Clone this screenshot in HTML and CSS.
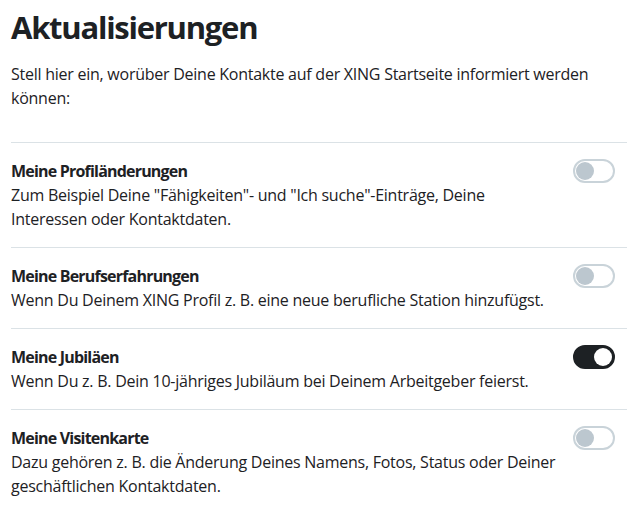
FILE: index.html
```html
<!DOCTYPE html>
<html lang="de">
<head>
<meta charset="utf-8">
<title>Aktualisierungen</title>
<link rel="stylesheet" href="styles.css">
</head>
<body>
<main class="page">
  <h1 class="title">Aktualisierungen</h1>
  <p class="intro">Stell hier ein, worüber Deine Kontakte auf der XING Startseite informiert werden können:</p>
  <ul class="list">
    <li class="row">
      <div class="text">
        <div class="row-title">Meine Profiländerungen</div>
        <div class="row-desc">Zum Beispiel Deine "Fähigkeiten"- und "Ich suche"-Einträge, Deine Interessen oder Kontaktdaten.</div>
      </div>
      <span class="toggle"></span>
    </li>
    <li class="row">
      <div class="text">
        <div class="row-title">Meine Berufserfahrungen</div>
        <div class="row-desc">Wenn Du Deinem XING Profil z. B. eine neue berufliche Station hinzufügst.</div>
      </div>
      <span class="toggle"></span>
    </li>
    <li class="row">
      <div class="text">
        <div class="row-title">Meine Jubiläen</div>
        <div class="row-desc">Wenn Du z. B. Dein 10-jähriges Jubiläum bei Deinem Arbeitgeber feierst.</div>
      </div>
      <span class="toggle on"></span>
    </li>
    <li class="row">
      <div class="text">
        <div class="row-title">Meine Visitenkarte</div>
        <div class="row-desc">Dazu gehören z. B. die Änderung Deines Namens, Fotos, Status oder Deiner geschäftlichen Kontaktdaten.</div>
      </div>
      <span class="toggle"></span>
    </li>
  </ul>
</main>
</body>
</html>
```
FILE: styles.css
```css
html, body {
  margin: 0;
  padding: 0;
  background: #ffffff;
}
body {
  font-family: "Open Sans", "Noto Sans", sans-serif;
  color: #1d2124;
}
.page {
  padding: 7px 9px 0 11px;
}
.title {
  margin: 0;
  font-size: 31px;
  line-height: 40px;
  font-weight: 700;
  letter-spacing: -1.25px;
}
.intro {
  margin: 15px 0 0;
  font-size: 16px;
  line-height: 24px;
  letter-spacing: -0.25px;
}
.list {
  list-style: none;
  margin: 32px 0 0;
  padding: 0;
}
.row {
  display: flex;
  align-items: flex-start;
  gap: 14px;
  border-top: 1px solid #dbe2e6;
  padding: 16px 0;
}
.text {
  flex: 1;
  min-width: 0;
}
.row-title {
  font-size: 16px;
  line-height: 24px;
  font-weight: 700;
  letter-spacing: -0.8px;
}
.row-desc {
  font-size: 16px;
  line-height: 24px;
  letter-spacing: -0.25px;
}
.toggle {
  flex: none;
  position: relative;
  width: 42px;
  height: 24px;
  box-sizing: border-box;
  border: 2px solid #c9d3d9;
  border-radius: 12px;
  margin-right: 12px;
  background: #ffffff;
}
.toggle::after {
  content: "";
  position: absolute;
  top: 1px;
  left: 1px;
  width: 18px;
  height: 18px;
  border-radius: 50%;
  background: #bcc7cf;
}
.toggle.on {
  background: #1d2124;
  border-color: #1d2124;
}
.toggle.on::after {
  left: auto;
  right: 1px;
  background: #ffffff;
}
```
